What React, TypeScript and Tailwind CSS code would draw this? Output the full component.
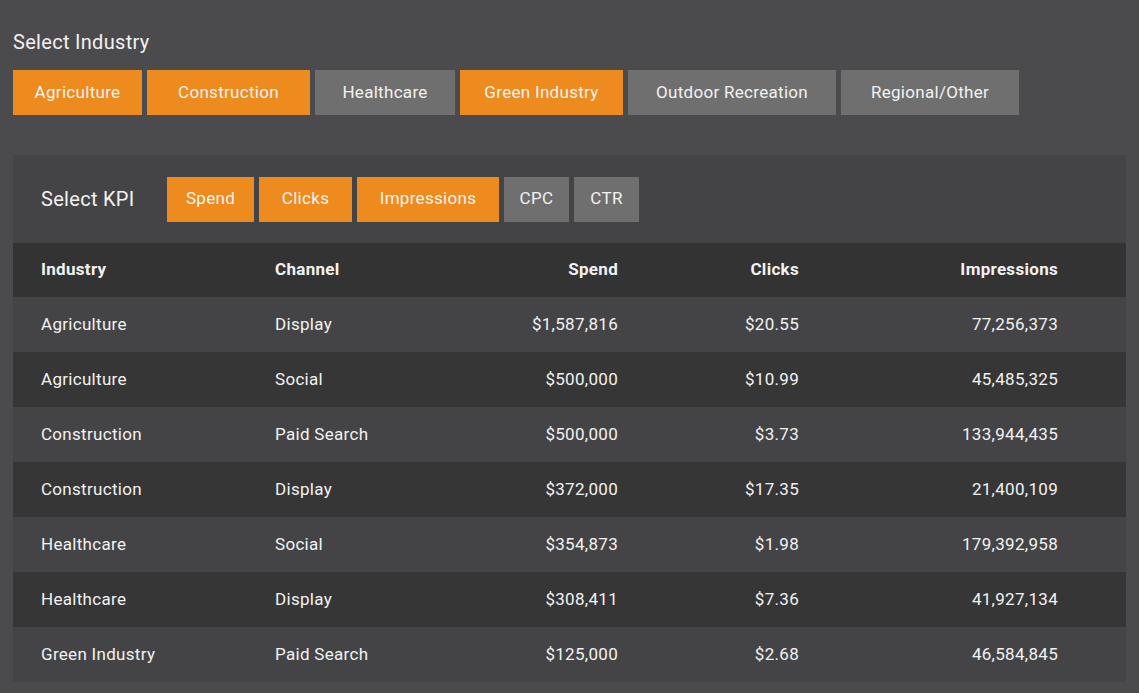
const industries: [string, boolean, number][] = [
  ["Agriculture", true, 129],
  ["Construction", true, 163],
  ["Healthcare", false, 140],
  ["Green Industry", true, 163],
  ["Outdoor Recreation", false, 208],
  ["Regional/Other", false, 178],
];
const kpis: [string, boolean, number][] = [
  ["Spend", true, 87],
  ["Clicks", true, 93],
  ["Impressions", true, 142],
  ["CPC", false, 65],
  ["CTR", false, 65],
];
const rows = [
  ["Agriculture", "Display", "$1,587,816", "$20.55", "77,256,373"],
  ["Agriculture", "Social", "$500,000", "$10.99", "45,485,325"],
  ["Construction", "Paid Search", "$500,000", "$3.73", "133,944,435"],
  ["Construction", "Display", "$372,000", "$17.35", "21,400,109"],
  ["Healthcare", "Social", "$354,873", "$1.98", "179,392,958"],
  ["Healthcare", "Display", "$308,411", "$7.36", "41,927,134"],
  ["Green Industry", "Paid Search", "$125,000", "$2.68", "46,584,845"],
];
const grid = "grid grid-cols-[234px_200px_143px_181px_259px] px-[28px] items-center";

export default function App() {
  return (
    <div className="w-[1139px] h-[693px] bg-[#4b4b4d] text-[#f2f2f2] overflow-hidden tracking-[0.3px]" style={{ fontFamily: "Roboto, 'Noto Sans', sans-serif" }}>
      <div className="pt-[28px] pl-[13px]">
        <div className="text-[20px] h-[28px] leading-[28px]">Select Industry</div>
        <div className="flex gap-[5px] mt-[14px]">
          {industries.map(([n, a, w]) => (
            <div key={n} style={{ width: w }} className={`h-[45px] flex items-center justify-center text-[17px] ${a ? "bg-[#ed8b1e]" : "bg-[#6f6f6f]"}`}>{n}</div>
          ))}
        </div>
      </div>
      <div className="mt-[40px] ml-[13px] w-[1113px] bg-[#444446] pb-0">
        <div className="flex items-center h-[88px]">
          <div className="text-[20px] pl-[28px] w-[154px]">Select KPI</div>
          <div className="flex gap-[5px]">
            {kpis.map(([n, a, w]) => (
              <div key={n} style={{ width: w }} className={`h-[45px] flex items-center justify-center text-[17px] ${a ? "bg-[#ed8b1e]" : "bg-[#6f6f6f]"}`}>{n}</div>
            ))}
          </div>
        </div>
        <div className={`${grid} h-[54px] bg-[#333333] font-bold text-[17px]`}>
          <div>Industry</div><div>Channel</div><div className="text-right">Spend</div><div className="text-right">Clicks</div><div className="text-right">Impressions</div>
        </div>
        {rows.map((r, i) => (
          <div key={i} className={`${grid} h-[55px] text-[17px] ${i % 2 ? "bg-[#363636]" : "bg-[#444446]"}`}>
            <div>{r[0]}</div><div>{r[1]}</div><div className="text-right">{r[2]}</div><div className="text-right">{r[3]}</div><div className="text-right">{r[4]}</div>
          </div>
        ))}
      </div>
    </div>
  );
}
